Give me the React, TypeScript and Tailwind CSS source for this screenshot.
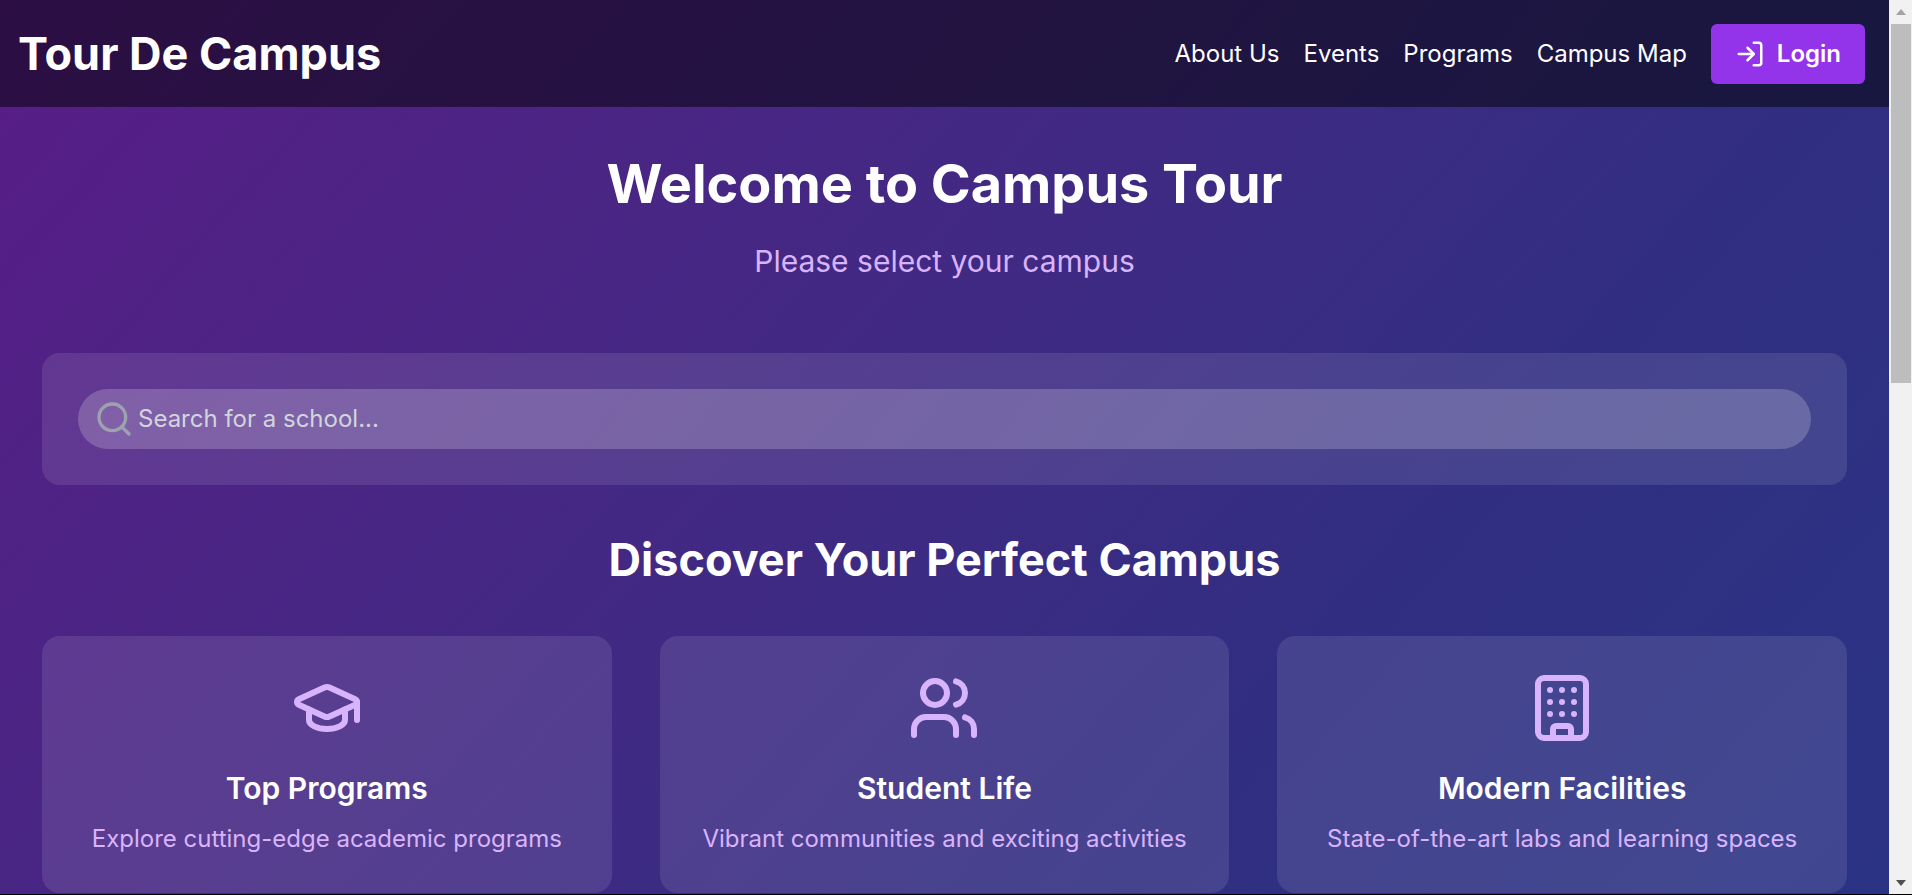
import { Building, GraduationCap, LogIn, Search, Users } from "lucide-react";

const features = [
  { icon: GraduationCap, title: "Top Programs", text: "Explore cutting-edge academic programs" },
  { icon: Users, title: "Student Life", text: "Vibrant communities and exciting activities" },
  { icon: Building, title: "Modern Facilities", text: "State-of-the-art labs and learning spaces" },
];

const links = ["About Us", "Events", "Programs", "Campus Map"];

// browser scrollbar from the screenshot, headless chrome doesn't draw one
const Scrollbar = () => (
  <aside className="flex h-full w-[23px] shrink-0 flex-col bg-[#f1f1f1]">
    <div className="flex h-[24px] justify-center pt-[9px]">
      <svg width="10" height="6" viewBox="0 0 10 6">
        <path d="M5 0L10 6H0Z" fill="#a3a3a3" />
      </svg>
    </div>
    <div className="ml-[2px] mr-px h-[359px] bg-[#bdbdbd]" />
    <div className="mt-auto flex h-[24px] justify-center pt-[10px]">
      <svg width="10" height="6" viewBox="0 0 10 6">
        <path d="M0 0H10L5 6Z" fill="#505050" />
      </svg>
    </div>
  </aside>
);

export default function App() {
  return (
    <div className="bg-black pb-px">
      <div className="flex h-[894px]">
        <div className="min-w-0 flex-1 overflow-hidden">
          <div className="min-h-[2107px] bg-gradient-to-br from-[#581c87] via-[#312e81] to-[#1e3a8a] font-['Inter',sans-serif] text-white">
            <header className="flex h-[107px] items-center justify-between bg-black/50 pl-[18px] pr-[24px]">
              <h1 className="text-[45px] font-bold">Tour De Campus</h1>
              <nav className="flex items-center gap-6">
                {links.map((link) => (
                  <a key={link} className="text-[24px]">
                    {link}
                  </a>
                ))}
                <button className="flex h-[60px] items-center gap-3 rounded-[6px] bg-[#9333ea] px-6 text-[24px] font-semibold">
                  <LogIn size={30} />
                  Login
                </button>
              </nav>
            </header>

            <main className="px-[42px]">
              <section className="pt-9 text-center">
                <h2 className="text-[54px] font-bold">Welcome to Campus Tour</h2>
                <p className="mt-[15px] text-[30px] text-[#d8b4fe]">Please select your campus</p>
              </section>

              <section className="mt-[69px] rounded-[18px] bg-white/10 p-9">
                <div className="flex h-[60px] items-center gap-1 rounded-full bg-white/20 pl-4 pr-5">
                  <Search size={40} className="text-[#9ca3af]" />
                  <span className="text-[24px] text-[#d1d5db]">Search for a school...</span>
                </div>
              </section>

              <h2 className="mt-[41px] text-center text-[45px] font-bold">Discover Your Perfect Campus</h2>

              <section className="mt-[42px] grid grid-cols-3 gap-12">
                {features.map(({ icon: Icon, title, text }) => (
                  <div key={title} className="flex flex-col items-center rounded-[18px] bg-white/10 p-9 text-center">
                    <Icon size={72} className="text-[#d8b4fe]" />
                    <h3 className="mt-[22px] text-[30px] font-semibold">{title}</h3>
                    <p className="mt-[10px] text-[24px] text-[#d8b4fe]">{text}</p>
                  </div>
                ))}
              </section>
            </main>
          </div>
        </div>
        <Scrollbar />
      </div>
    </div>
  );
}
